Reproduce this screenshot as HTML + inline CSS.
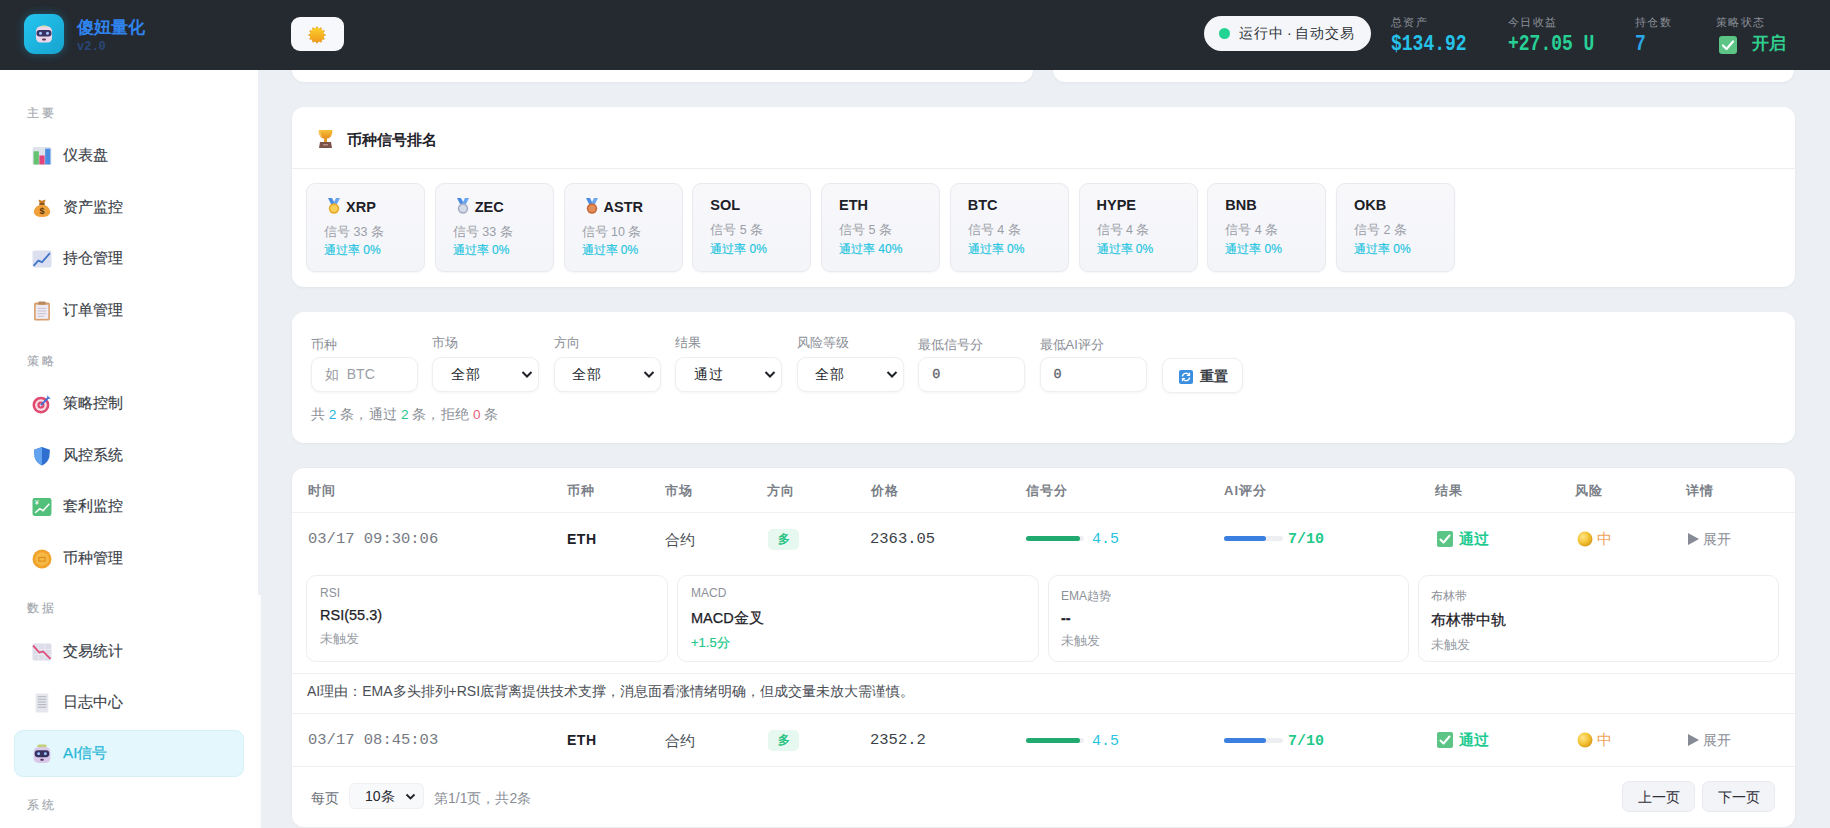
<!DOCTYPE html>
<html><head><meta charset="utf-8">
<style>
*{box-sizing:border-box;margin:0;padding:0}
html,body{width:1830px;height:828px;overflow:hidden}
body{position:relative;background:#ecf0f4;font-family:"Liberation Sans",sans-serif;color:#2b2f36}
.abs{position:absolute}
.mono{font-family:"Liberation Mono",monospace}
/* header */
#hdr{left:0;top:0;width:1830px;height:70px;background:#252a31}
/* sidebar */
#side{left:0;top:70px;width:258px;height:758px;background:#fff}
.sec{position:absolute;left:27px;font-size:11.5px;color:#a3a7ae;letter-spacing:2.5px;line-height:14px;-webkit-text-stroke:0.15px #a3a7ae}
.nav{position:absolute;left:14px;width:230px;height:47px;border-radius:9px}
.nav .ic{position:absolute;left:18px;top:14px;width:20px;height:20px}
.nav .tx{position:absolute;left:49px;top:-1px;line-height:47px;font-size:15.2px;color:#3a3e47;-webkit-text-stroke:0.15px #3a3e47}
.nav.act{background:#e3f7fc;box-shadow:0 0 0 1px #d8f1f8 inset}
.nav.act .tx{color:#29b8d8;-webkit-text-stroke:0.25px #29b8d8}
/* cards */
.card{position:absolute;background:#fff;border-radius:12px;box-shadow:0 1px 3px rgba(20,30,50,.05)}

.coin{position:absolute;top:183px;width:119px;height:89px;border-radius:9px;background:linear-gradient(180deg,#f8f8fb,#f4f5f9);border:1px solid #e8eaef;box-shadow:0 1px 2px rgba(0,0,0,.04)}
.coin .nm{position:absolute;left:17px;top:11px;font-size:14.5px;font-weight:bold;color:#1d2027;line-height:20px;white-space:nowrap}
.coin .sg{position:absolute;left:17px;top:38px;font-size:12.5px;color:#9a9ea7;line-height:16px;white-space:nowrap}
.coin .pr{position:absolute;left:17px;top:57px;font-size:12px;color:#21c4e0;line-height:16px;white-space:nowrap;-webkit-text-stroke:0.15px #21c4e0}
.coin.md .nm{left:20px;top:13px}
.coin.md .sg{top:40px}
.coin.md .pr{top:58px}

.flb{position:absolute;font-size:13px;color:#8a8e96;line-height:16px;white-space:nowrap}
.fin{position:absolute;top:45px;width:107px;height:35px;border-radius:9px;background:#fff;border:1px solid #edeff2;box-shadow:0 1px 3px rgba(20,30,50,.05)}
.fin .v{position:absolute;left:13px;top:0;line-height:33px;font-size:14px;color:#9a9ea6;white-space:nowrap}
.fin .s{position:absolute;left:17.5px;top:0;line-height:33px;font-size:14px;color:#25282e;letter-spacing:1px}
.fin svg{position:absolute;right:5px;top:12px}

.th{position:absolute;top:15px;font-size:13px;font-weight:bold;color:#7b7f88;line-height:16px;letter-spacing:1px;white-space:nowrap}
.hl{position:absolute;left:0;width:1503px;height:1px;background:#eef0f3}
.td{position:absolute;font-size:15px;line-height:20px;white-space:nowrap}
.dc{position:absolute;top:107px;height:87px;border-radius:10px;border:1px solid #eceef2;background:#fff}
.dc .a{position:absolute;left:13px;top:10px;font-size:12px;color:#8d9199;line-height:15px}
.dc .b{position:absolute;left:13px;top:31px;font-size:14.5px;color:#1d2027;line-height:19px;-webkit-text-stroke:0.25px #1d2027}
.dc .c{position:absolute;left:13px;top:54px;font-size:13px;color:#9a9ea6;line-height:16px}
</style></head><body>
<div id="hdr" class="abs" style="z-index:5">
  <div class="abs" style="left:24px;top:14px;width:40px;height:40px;border-radius:11px;background:linear-gradient(135deg,#23c6f0,#16a3cf);box-shadow:0 0 8px rgba(30,180,230,.35)">
    <svg class="abs" style="left:10px;top:9px" width="20" height="21" viewBox="0 0 20 21">
      <path d="M5 4 Q10 0.5 15 4 Z" fill="#c8d88a"/>
      <rect x="2" y="3.5" width="16" height="16" rx="4.5" fill="#ecd6ea"/>
      <rect x="2.5" y="7" width="15" height="6.5" rx="3.2" fill="#3a3466"/>
      <circle cx="6.5" cy="10.2" r="1.5" fill="#a9c6ff"/><circle cx="13.5" cy="10.2" r="1.5" fill="#a9c6ff"/>
      <rect x="8" y="15.5" width="4" height="2" rx="1" fill="#5a3b55"/>
    </svg>
  </div>
  <div class="abs" style="left:77px;top:17px;font-size:17px;font-weight:bold;line-height:22px;color:#2f84ef">傻妞量化</div>
  <div class="abs mono" style="left:77px;top:40px;font-size:12px;font-weight:bold;line-height:14px;color:#2a4776">v2.0</div>
  <div class="abs" style="left:291px;top:17px;width:53px;height:34px;border-radius:9px;background:#f6f8fb">
    <svg class="abs" style="left:16px;top:8px" width="20" height="20" viewBox="0 0 20 20"><defs><linearGradient id="sg" x1="0" y1="0" x2="0" y2="1"><stop offset="0" stop-color="#fbd02c"/><stop offset="1" stop-color="#f09a1e"/></linearGradient></defs><circle cx="17.60" cy="10.00" r="1.0" fill="#e39a20"/><circle cx="16.58" cy="13.80" r="1.0" fill="#e39a20"/><circle cx="13.80" cy="16.58" r="1.0" fill="#e39a20"/><circle cx="10.00" cy="17.60" r="1.0" fill="#e39a20"/><circle cx="6.20" cy="16.58" r="1.0" fill="#e39a20"/><circle cx="3.42" cy="13.80" r="1.0" fill="#e39a20"/><circle cx="2.40" cy="10.00" r="1.0" fill="#e39a20"/><circle cx="3.42" cy="6.20" r="1.0" fill="#e39a20"/><circle cx="6.20" cy="3.42" r="1.0" fill="#e39a20"/><circle cx="10.00" cy="2.40" r="1.0" fill="#e39a20"/><circle cx="13.80" cy="3.42" r="1.0" fill="#e39a20"/><circle cx="16.58" cy="6.20" r="1.0" fill="#e39a20"/><circle cx="10" cy="10" r="7.3" fill="url(#sg)"/></svg>
  </div>
  <div class="abs" style="left:1204px;top:16px;width:167px;height:35px;border-radius:18px;background:#f4f6f9">
    <div class="abs" style="left:15px;top:12px;width:11px;height:11px;border-radius:50%;background:#22d393"></div>
    <div class="abs" style="left:35px;top:0;line-height:35px;font-size:14px;color:#2d3138;letter-spacing:1px">运行中<span style="margin:0 2px 0 3px">·</span>自动交易</div>
  </div>
  <div class="abs" style="left:1391px;top:15px;font-size:11px;line-height:14px;color:#8c9098;letter-spacing:1.3px">总资产</div>
  <div class="abs mono" style="left:1391px;top:31px;font-size:18px;font-weight:bold;line-height:22px;transform:scaleY(1.2);transform-origin:0 0;color:#26c2ea">$134.92</div>
  <div class="abs" style="left:1508px;top:15px;font-size:11px;line-height:14px;color:#8c9098;letter-spacing:1.3px">今日收益</div>
  <div class="abs mono" style="left:1508px;top:31px;font-size:18px;font-weight:bold;line-height:22px;transform:scaleY(1.2);transform-origin:0 0;color:#27d196">+27.05 U</div>
  <div class="abs" style="left:1635px;top:15px;font-size:11px;line-height:14px;color:#8c9098;letter-spacing:1.3px">持仓数</div>
  <div class="abs mono" style="left:1635px;top:31px;font-size:18px;font-weight:bold;line-height:22px;transform:scaleY(1.2);transform-origin:0 0;color:#2aa7e8">7</div>
  <div class="abs" style="left:1716px;top:15px;font-size:11px;line-height:14px;color:#8c9098;letter-spacing:1.3px">策略状态</div>
  <div class="abs" style="left:1719px;top:36px;width:18px;height:18px;border-radius:3px;background:#5cc586">
    <svg width="18" height="18" viewBox="0 0 18 18"><path d="M4 9.5 L7.5 13 L14 5.5" stroke="#fff" stroke-width="2.2" fill="none" stroke-linecap="round" stroke-linejoin="round"/></svg>
  </div>
  <div class="abs" style="left:1752px;top:33px;font-size:17px;font-weight:bold;line-height:22px;color:#2fd08f;font-family:'Liberation Serif',serif">开启</div>
</div>
<div class="abs" style="left:258px;top:595px;width:3px;height:233px;background:#fdfdfe"></div>
<div id="side" class="abs">
<div class="sec" style="top:36px">主要</div>
<div class="nav" style="top:62.0px"><svg class="ic" viewBox="0 0 19 19"><rect x="0.5" y="1" width="18" height="17" rx="1.5" fill="#dfe4ec"/><rect x="1.5" y="5" width="5" height="12.5" fill="#63c36e"/><rect x="7" y="9" width="5" height="8.5" fill="#e2457c"/><rect x="12.5" y="2.5" width="5" height="15" fill="#4a8ee2"/></svg><div class="tx">仪表盘</div></div>
<div class="nav" style="top:113.5px"><svg class="ic" viewBox="0 0 19 19"><path d="M6 1.5 Q9.5 3.5 13 1.5 L11.5 5.5 L7.5 5.5 Z" fill="#c97a22"/><rect x="7" y="5" width="5" height="1.6" fill="#6a3a10"/><path d="M7.5 6.5 Q1.5 9 1.8 13.5 Q2.2 18 9.5 18 Q16.8 18 17.2 13.5 Q17.5 9 11.5 6.5 Z" fill="#eea03a"/><text x="9.5" y="15.5" font-size="8.5" font-weight="bold" text-anchor="middle" fill="#5a3410" font-family="Liberation Sans">$</text></svg><div class="tx">资产监控</div></div>
<div class="nav" style="top:165.0px"><svg class="ic" viewBox="0 0 19 19"><rect x="0.5" y="1.5" width="18" height="16" rx="1.5" fill="#dcdff0"/><path d="M1.5 16 L6 11 L9.5 12.5 L17 4" stroke="#3f74c9" stroke-width="1.7" fill="none"/></svg><div class="tx">持仓管理</div></div>
<div class="nav" style="top:216.5px"><svg class="ic" viewBox="0 0 19 19"><rect x="2" y="1.5" width="15" height="17" rx="1.5" fill="#d89d6a"/><rect x="3.5" y="3.5" width="12" height="13.5" fill="#efeaf2"/><rect x="6" y="0.5" width="7" height="3" rx="1" fill="#b8895f"/><path d="M5.5 7h8M5.5 9.5h8M5.5 12h8M5.5 14.5h6" stroke="#c2c0d0" stroke-width="0.9"/></svg><div class="tx">订单管理</div></div>
<div class="sec" style="top:283.5px">策略</div>
<div class="nav" style="top:310.0px"><svg class="ic" viewBox="0 0 19 19"><circle cx="8.5" cy="10.5" r="8" fill="#e04a6e"/><circle cx="8.5" cy="10.5" r="5.6" fill="#f6dbe4"/><circle cx="8.5" cy="10.5" r="3.4" fill="#e04a6e"/><circle cx="8.5" cy="10.5" r="1.3" fill="#f6dbe4"/><path d="M8.5 10.5 L16 3" stroke="#3a70d6" stroke-width="1.8"/><path d="M14 1 L15 4 L18 5 L16 3 Z" fill="#3a70d6"/></svg><div class="tx">策略控制</div></div>
<div class="nav" style="top:361.5px"><svg class="ic" viewBox="0 0 19 19"><path d="M9.5 1 L17 3.5 L16.5 10.5 Q15 16 9.5 18.5 Q4 16 2.5 10.5 L2 3.5 Z" fill="#2f6fd0"/><path d="M9.5 1 L2 3.5 L2.5 10.5 Q4 16 9.5 18.5 Z" fill="#62a3f0"/></svg><div class="tx">风控系统</div></div>
<div class="nav" style="top:413.0px"><svg class="ic" viewBox="0 0 19 19"><rect x="0.5" y="1" width="18" height="17" rx="2" fill="#52c07a"/><path d="M3 15 L7.5 11 L10.5 13 L16.5 6.5" stroke="#fff" stroke-width="1.4" fill="none"/><text x="2.5" y="8" font-size="7" fill="#fff" font-family="Liberation Sans">¥</text></svg><div class="tx">套利监控</div></div>
<div class="nav" style="top:464.5px"><svg class="ic" viewBox="0 0 19 19"><circle cx="9.5" cy="9.5" r="9" fill="#f0a22a"/><circle cx="9.5" cy="9.5" r="6.5" fill="#f6b844"/><rect x="6.5" y="8" width="6" height="3.5" fill="none" stroke="#d98a14" stroke-width="1"/></svg><div class="tx">币种管理</div></div>
<div class="sec" style="top:531px">数据</div>
<div class="nav" style="top:557.5px"><svg class="ic" viewBox="0 0 19 19"><rect x="0.5" y="1.5" width="18" height="16" rx="1.5" fill="#dcdde8"/><path d="M6 1.5V17.5M12 1.5V17.5M0.5 7H18.5M0.5 12H18.5" stroke="#ebecf3" stroke-width=".8"/><path d="M1 3.5 L7 10 L10.5 9 L17.5 16" stroke="#e04a7a" stroke-width="1.7" fill="none"/></svg><div class="tx">交易统计</div></div>
<div class="nav" style="top:609.0px"><svg class="ic" viewBox="0 0 19 19"><rect x="3.5" y="0.5" width="12" height="18" rx="1" fill="#e6e7ec"/><path d="M5.5 3.5h8M5.5 6h8M5.5 8.5h8M5.5 11h8M5.5 13.5h8" stroke="#aeb1ba" stroke-width="0.9"/></svg><div class="tx">日志中心</div></div>
<div class="nav act" style="top:660.0px"><svg class="ic" viewBox="0 0 19 19"><rect x="5" y="0.5" width="9" height="3" rx="1.5" fill="#c5cf7a"/><rect x="1.5" y="3" width="16" height="15" rx="4.5" fill="#d9c8ea"/><rect x="2.5" y="6" width="14" height="6.5" rx="3.2" fill="#36305e"/><circle cx="6.3" cy="9.2" r="1.4" fill="#9ec3ff"/><circle cx="12.7" cy="9.2" r="1.4" fill="#9ec3ff"/><rect x="7.8" y="14" width="3.4" height="1.8" rx=".9" fill="#5a3b6a"/></svg><div class="tx">AI信号</div></div>
<div class="sec" style="top:727.5px">系统</div>
</div>
<div class="card" style="left:292px;top:58px;width:741px;height:24px"></div>
<div class="card" style="left:1053px;top:58px;width:741px;height:24px"></div>
<div class="card" style="left:292px;top:107px;width:1503px;height:180px">
  <svg class="abs" style="left:25px;top:22px" width="17" height="20" viewBox="0 0 17 20"><defs><linearGradient id="tg" x1="0" y1="0" x2="0" y2="1"><stop offset="0" stop-color="#f7c23a"/><stop offset="1" stop-color="#e58a1e"/></linearGradient></defs><path d="M1.5 1 H15.5 Q15.5 9.5 8.5 10 Q1.5 9.5 1.5 1 Z" fill="url(#tg)"/><path d="M3 1.5 Q2 5 4.5 8" stroke="#f9d878" stroke-width="1" fill="none"/><rect x="7" y="9.5" width="3" height="3.5" fill="#e39a25"/><path d="M3 13 H14 L15 19 H2 Z" fill="#7b5348"/><rect x="6" y="15" width="5" height="1.5" fill="#b89080"/></svg>
  <div class="abs" style="left:55px;top:22px;font-size:15px;font-weight:bold;line-height:22px;color:#1f232a">币种信号排名</div>
  <div class="abs" style="left:0;top:61px;width:1503px;height:1px;background:#eceef2"></div>
</div>
<div class="coin md" style="left:306.00px"><div class="nm" style="padding-left:19px"><svg style="position:absolute;left:0;top:1px" width="14" height="16" viewBox="0 0 14 16"><path d="M1 0 L5 0 L8 6 L4 6 Z" fill="#4a8ae0"/><path d="M13 0 L9 0 L6 6 L10 6 Z" fill="#6aa6f0"/><circle cx="7" cy="10.5" r="5.2" fill="#e9a92a"/><circle cx="7" cy="10.5" r="3.6" fill="#f7cf5a"/></svg>XRP</div><div class="sg">信号 33 条</div><div class="pr">通过率 0%</div></div>
<div class="coin md" style="left:434.75px"><div class="nm" style="padding-left:19px"><svg style="position:absolute;left:0;top:1px" width="14" height="16" viewBox="0 0 14 16"><path d="M1 0 L5 0 L8 6 L4 6 Z" fill="#4a8ae0"/><path d="M13 0 L9 0 L6 6 L10 6 Z" fill="#6aa6f0"/><circle cx="7" cy="10.5" r="5.2" fill="#a8b0c8"/><circle cx="7" cy="10.5" r="3.6" fill="#d6dbe8"/></svg>ZEC</div><div class="sg">信号 33 条</div><div class="pr">通过率 0%</div></div>
<div class="coin md" style="left:563.50px"><div class="nm" style="padding-left:19px"><svg style="position:absolute;left:0;top:1px" width="14" height="16" viewBox="0 0 14 16"><path d="M1 0 L5 0 L8 6 L4 6 Z" fill="#4a8ae0"/><path d="M13 0 L9 0 L6 6 L10 6 Z" fill="#6aa6f0"/><circle cx="7" cy="10.5" r="5.2" fill="#c8693a"/><circle cx="7" cy="10.5" r="3.6" fill="#e38d5a"/></svg>ASTR</div><div class="sg">信号 10 条</div><div class="pr">通过率 0%</div></div>
<div class="coin" style="left:692.25px"><div class="nm">SOL</div><div class="sg">信号 5 条</div><div class="pr">通过率 0%</div></div>
<div class="coin" style="left:821.00px"><div class="nm">ETH</div><div class="sg">信号 5 条</div><div class="pr">通过率 40%</div></div>
<div class="coin" style="left:949.75px"><div class="nm">BTC</div><div class="sg">信号 4 条</div><div class="pr">通过率 0%</div></div>
<div class="coin" style="left:1078.50px"><div class="nm">HYPE</div><div class="sg">信号 4 条</div><div class="pr">通过率 0%</div></div>
<div class="coin" style="left:1207.25px"><div class="nm">BNB</div><div class="sg">信号 4 条</div><div class="pr">通过率 0%</div></div>
<div class="coin" style="left:1336.00px"><div class="nm">OKB</div><div class="sg">信号 2 条</div><div class="pr">通过率 0%</div></div>
<div class="card" style="left:292px;top:312px;width:1503px;height:131px">
<div class="flb" style="left:19.0px;top:24.5px">币种</div>
<div class="fin" style="left:19.0px"><div class="v">如&nbsp; BTC</div></div>
<div class="flb" style="left:140.4px;top:22.5px">市场</div>
<div class="fin" style="left:140.4px"><div class="s">全部</div><svg width="12" height="9" viewBox="0 0 12 9"><path d="M1.5 2 L6 6.5 L10.5 2" stroke="#1d2027" stroke-width="2" fill="none"/></svg></div>
<div class="flb" style="left:261.9px;top:22.5px">方向</div>
<div class="fin" style="left:261.9px"><div class="s">全部</div><svg width="12" height="9" viewBox="0 0 12 9"><path d="M1.5 2 L6 6.5 L10.5 2" stroke="#1d2027" stroke-width="2" fill="none"/></svg></div>
<div class="flb" style="left:383.3px;top:22.5px">结果</div>
<div class="fin" style="left:383.3px"><div class="s">通过</div><svg width="12" height="9" viewBox="0 0 12 9"><path d="M1.5 2 L6 6.5 L10.5 2" stroke="#1d2027" stroke-width="2" fill="none"/></svg></div>
<div class="flb" style="left:504.7px;top:22.5px">风险等级</div>
<div class="fin" style="left:504.7px"><div class="s">全部</div><svg width="12" height="9" viewBox="0 0 12 9"><path d="M1.5 2 L6 6.5 L10.5 2" stroke="#1d2027" stroke-width="2" fill="none"/></svg></div>
<div class="flb" style="left:626.2px;top:24.5px">最低信号分</div>
<div class="fin" style="left:626.2px"><div class="v mono" style="font-size:13.5px;color:#5d6169;-webkit-text-stroke:0.3px #5d6169">0</div></div>
<div class="flb" style="left:747.6px;top:24.5px">最低AI评分</div>
<div class="fin" style="left:747.6px"><div class="v mono" style="font-size:13.5px;color:#5d6169;-webkit-text-stroke:0.3px #5d6169">0</div></div>
<div class="fin" style="left:870px;top:46px;width:81px;height:35px">
 <svg style="position:absolute;left:16px;top:11px" width="14" height="14" viewBox="0 0 14 14"><rect width="14" height="14" rx="2" fill="#3b8fe0"/><path d="M3.5 6.5 A3.5 3.5 0 0 1 10 5 M10.5 7.5 A3.5 3.5 0 0 1 4 9" stroke="#fff" stroke-width="1.4" fill="none"/><path d="M10.5 2.8 V5.5 H7.8 M3.5 11.2 V8.5 H6.2" stroke="#fff" stroke-width="1.2" fill="none"/></svg>
 <div style="position:absolute;left:37px;top:0;line-height:35px;font-size:14px;font-weight:bold;color:#3a3e46">重置</div></div>
<div class="abs" style="left:19px;top:94px;font-size:13.6px;line-height:18px;color:#8a8e96;white-space:nowrap">共 <span style="color:#22b8e0">2</span> 条<span style="display:inline-block;width:15px">，</span>通过 <span style="color:#22c98a">2</span> 条<span style="display:inline-block;width:15px">，</span>拒绝 <span style="color:#f0607a">0</span> 条</div>
</div>
<div class="card" style="left:292px;top:468px;width:1503px;height:359px;box-shadow:0 0 0 1px #e9ebef,0 1px 3px rgba(20,30,50,.05)">
<div class="th" style="left:16px">时间</div>
<div class="th" style="left:275px">币种</div>
<div class="th" style="left:373px">市场</div>
<div class="th" style="left:475px">方向</div>
<div class="th" style="left:579px">价格</div>
<div class="th" style="left:734px">信号分</div>
<div class="th" style="left:932px">AI评分</div>
<div class="th" style="left:1143px">结果</div>
<div class="th" style="left:1283px">风险</div>
<div class="th" style="left:1394px">详情</div>
<div class="hl" style="top:44px"></div>

 <div class="td mono" style="left:16px;top:60.5px;color:#767a83;font-size:15.5px">03/17 09:30:06</div>
 <div class="td" style="left:275px;top:60.5px;font-weight:bold;color:#1d2027;font-size:14px;letter-spacing:.5px">ETH</div>
 <div class="td" style="left:373px;top:61.5px;color:#4a4e56">合约</div>
 <div class="abs" style="left:476px;top:60.5px;width:31px;height:21px;border-radius:5px;background:#e6f8ef;text-align:center;line-height:21px;font-size:12px;font-weight:bold;color:#27c283">多</div>
 <div class="td mono" style="left:578px;top:60.5px;color:#3b3f47;font-size:15.5px">2363.05</div>
 <div class="abs" style="left:734px;top:68.0px;width:58px;height:5px;border-radius:3px;background:#eceef2"><div style="width:54px;height:5px;border-radius:3px;background:#20aa70"></div></div>
 <div class="td mono" style="left:800px;top:60.5px;color:#28c3e0;font-size:15px;margin-top:1px">4.5</div>
 <div class="abs" style="left:932px;top:68.0px;width:59px;height:5px;border-radius:3px;background:#eceef2"><div style="width:42px;height:5px;border-radius:3px;background:#3b7fe0"></div></div>
 <div class="td mono" style="left:996px;top:60.5px;color:#22c98a;font-size:15px;font-weight:bold;margin-top:1px">7/10</div>
 <div class="abs" style="left:1145px;top:62.5px;width:16px;height:16px;border-radius:2px;background:#5cc586"><svg width="16" height="16" viewBox="0 0 16 16"><path d="M3.5 8.5 L6.5 11.5 L12.5 4.5" stroke="#fff" stroke-width="2" fill="none" stroke-linecap="round" stroke-linejoin="round"/></svg></div>
 <div class="td" style="left:1167px;top:60.5px;color:#1ecb90;font-weight:bold">通过</div>
 <svg class="abs" style="left:1285px;top:62.5px" width="16" height="16" viewBox="0 0 16 16"><defs><radialGradient id="g70.5" cx=".35" cy=".35" r=".7"><stop offset="0" stop-color="#ffe58a"/><stop offset=".6" stop-color="#f1c232"/><stop offset="1" stop-color="#d99a1a"/></radialGradient></defs><circle cx="8" cy="8" r="7.5" fill="url(#g70.5)"/></svg>
 <div class="td" style="left:1304.5px;top:60.5px;color:#f0a35a;font-size:15px">中</div>
 <svg class="abs" style="left:1395px;top:63.5px" width="13" height="14" viewBox="0 0 13 14"><path d="M1 1 L12 7 L1 13 Z" fill="#858a94"/></svg>
 <div class="td" style="left:1411px;top:60.5px;color:#8a8e96;font-size:14px">展开</div>
<div class="dc" style="left:14px;width:362px"><div class="a" style="top:10px">RSI</div><div class="b" style="top:30px">RSI(55.3)</div><div class="c" style="top:54.5px">未触发</div></div>
<div class="dc" style="left:385px;width:362px"><div class="a" style="top:10px">MACD</div><div class="b" style="top:33px">MACD金叉</div><div class="c" style="top:59px;color:#22c98a;-webkit-text-stroke:0.2px #22c98a">+1.5分</div></div>
<div class="dc" style="left:756px;width:361px"><div class="a" style="top:13px;left:12px">EMA趋势</div><div class="b" style="top:33px;left:12px;font-weight:bold">--</div><div class="c" style="top:56.5px;left:12px">未触发</div></div>
<div class="dc" style="left:1126px;width:361px"><div class="a" style="top:13px;left:12px">布林带</div><div class="b" style="top:35px;left:12px">布林带中轨</div><div class="c" style="top:60.5px;left:12px">未触发</div></div>
<div class="hl" style="top:205px"></div>
<div class="td" style="left:15px;top:213px;font-size:14px;color:#4a4e56">AI理由：EMA多头排列+RSI底背离提供技术支撑，消息面看涨情绪明确，但成交量未放大需谨慎。</div>
<div class="hl" style="top:245px"></div>

 <div class="td mono" style="left:16px;top:262px;color:#767a83;font-size:15.5px">03/17 08:45:03</div>
 <div class="td" style="left:275px;top:262px;font-weight:bold;color:#1d2027;font-size:14px;letter-spacing:.5px">ETH</div>
 <div class="td" style="left:373px;top:263px;color:#4a4e56">合约</div>
 <div class="abs" style="left:476px;top:262px;width:31px;height:21px;border-radius:5px;background:#e6f8ef;text-align:center;line-height:21px;font-size:12px;font-weight:bold;color:#27c283">多</div>
 <div class="td mono" style="left:578px;top:262px;color:#3b3f47;font-size:15.5px">2352.2</div>
 <div class="abs" style="left:734px;top:269.5px;width:58px;height:5px;border-radius:3px;background:#eceef2"><div style="width:54px;height:5px;border-radius:3px;background:#20aa70"></div></div>
 <div class="td mono" style="left:800px;top:262px;color:#28c3e0;font-size:15px;margin-top:2px">4.5</div>
 <div class="abs" style="left:932px;top:269.5px;width:59px;height:5px;border-radius:3px;background:#eceef2"><div style="width:42px;height:5px;border-radius:3px;background:#3b7fe0"></div></div>
 <div class="td mono" style="left:996px;top:262px;color:#22c98a;font-size:15px;font-weight:bold;margin-top:2px">7/10</div>
 <div class="abs" style="left:1145px;top:264px;width:16px;height:16px;border-radius:2px;background:#5cc586"><svg width="16" height="16" viewBox="0 0 16 16"><path d="M3.5 8.5 L6.5 11.5 L12.5 4.5" stroke="#fff" stroke-width="2" fill="none" stroke-linecap="round" stroke-linejoin="round"/></svg></div>
 <div class="td" style="left:1167px;top:262px;color:#1ecb90;font-weight:bold">通过</div>
 <svg class="abs" style="left:1285px;top:264px" width="16" height="16" viewBox="0 0 16 16"><defs><radialGradient id="g271" cx=".35" cy=".35" r=".7"><stop offset="0" stop-color="#ffe58a"/><stop offset=".6" stop-color="#f1c232"/><stop offset="1" stop-color="#d99a1a"/></radialGradient></defs><circle cx="8" cy="8" r="7.5" fill="url(#g271)"/></svg>
 <div class="td" style="left:1304.5px;top:262px;color:#f0a35a;font-size:15px">中</div>
 <svg class="abs" style="left:1395px;top:265px" width="13" height="14" viewBox="0 0 13 14"><path d="M1 1 L12 7 L1 13 Z" fill="#858a94"/></svg>
 <div class="td" style="left:1411px;top:262px;color:#8a8e96;font-size:14px">展开</div>
<div class="hl" style="top:298px"></div>
<div class="td" style="left:19px;top:320px;font-size:14px;color:#6b6f78">每页</div>
 <div class="abs" style="left:57px;top:315px;width:75px;height:26px;border-radius:6px;background:#f8f9fb;border:1px solid #eef0f3"><div style="position:absolute;left:15px;top:0;line-height:24px;font-size:14px;color:#25282e">10条</div><svg style="position:absolute;right:7px;top:9px" width="11" height="8" viewBox="0 0 11 8"><path d="M1.5 1.5 L5.5 5.5 L9.5 1.5" stroke="#1d2027" stroke-width="1.8" fill="none"/></svg></div>
 <div class="td" style="left:142px;top:320px;font-size:14px;color:#8a8e96">第1/1页，共2条</div>
 <div class="abs" style="left:1330px;top:313px;width:73px;height:31px;border-radius:7px;background:#f3f4f8;border:1px solid #e8eaef;text-align:center;line-height:31px;font-size:14px;color:#2b2f36">上一页</div>
 <div class="abs" style="left:1410px;top:313px;width:73px;height:31px;border-radius:7px;background:#f3f4f8;border:1px solid #e8eaef;text-align:center;line-height:31px;font-size:14px;color:#2b2f36">下一页</div>
</div>
</body></html>
